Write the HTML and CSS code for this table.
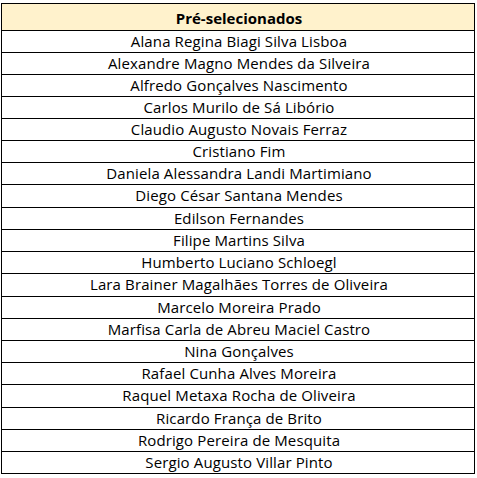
FILE: index.html
```html
<!DOCTYPE html>
<html lang="pt">
<head>
<meta charset="utf-8">
<title>Pré-selecionados</title>
<link rel="stylesheet" href="styles.css">
</head>
<body>
<div class="sheet">
  <div class="row head">Pré-selecionados</div>
  <div class="row">Alana Regina Biagi Silva Lisboa</div>
  <div class="row">Alexandre Magno Mendes da Silveira</div>
  <div class="row">Alfredo Gonçalves Nascimento</div>
  <div class="row">Carlos Murilo de Sá Libório</div>
  <div class="row">Claudio Augusto Novais Ferraz</div>
  <div class="row">Cristiano Fim</div>
  <div class="row">Daniela Alessandra Landi Martimiano</div>
  <div class="row">Diego César Santana Mendes</div>
  <div class="row">Edilson Fernandes</div>
  <div class="row">Filipe Martins Silva</div>
  <div class="row">Humberto Luciano Schloegl</div>
  <div class="row">Lara Brainer Magalhães Torres de Oliveira</div>
  <div class="row">Marcelo Moreira Prado</div>
  <div class="row">Marfisa Carla de Abreu Maciel Castro</div>
  <div class="row">Nina Gonçalves</div>
  <div class="row">Rafael Cunha Alves Moreira</div>
  <div class="row">Raquel Metaxa Rocha de Oliveira</div>
  <div class="row">Ricardo França de Brito</div>
  <div class="row">Rodrigo Pereira de Mesquita</div>
  <div class="row">Sergio Augusto Villar Pinto</div>
</div>
</body>
</html>
```
FILE: styles.css
```css
html, body {
  margin: 0;
  padding: 0;
  background: #fff;
}
body {
  padding: 3px 0 0 1px;
  font-family: "Open Sans", "Liberation Sans", sans-serif;
  font-size: 15px;
  letter-spacing: 0.12px;
  color: #000;
}
.sheet {
  width: 472px;
  border: 1px solid #000;
  display: flex;
  flex-direction: column;
}
.row {
  border-bottom: 1px solid #000;
  display: flex;
  align-items: center;
  justify-content: center;
  padding: 0 0 1px 2px;
  box-sizing: border-box;
  height: 22px;
  white-space: nowrap;
  line-height: 1;
}
.row:last-child {
  border-bottom: none;
  height: 21px;
}
.row:nth-child(9),
.row:nth-child(13),
.row:nth-child(18) {
  height: 23px;
}
.head {
  height: 27px;
  padding: 3px 0 0 2px;
  background: #fff2cc;
  font-weight: 700;
  letter-spacing: 0;
}
```
